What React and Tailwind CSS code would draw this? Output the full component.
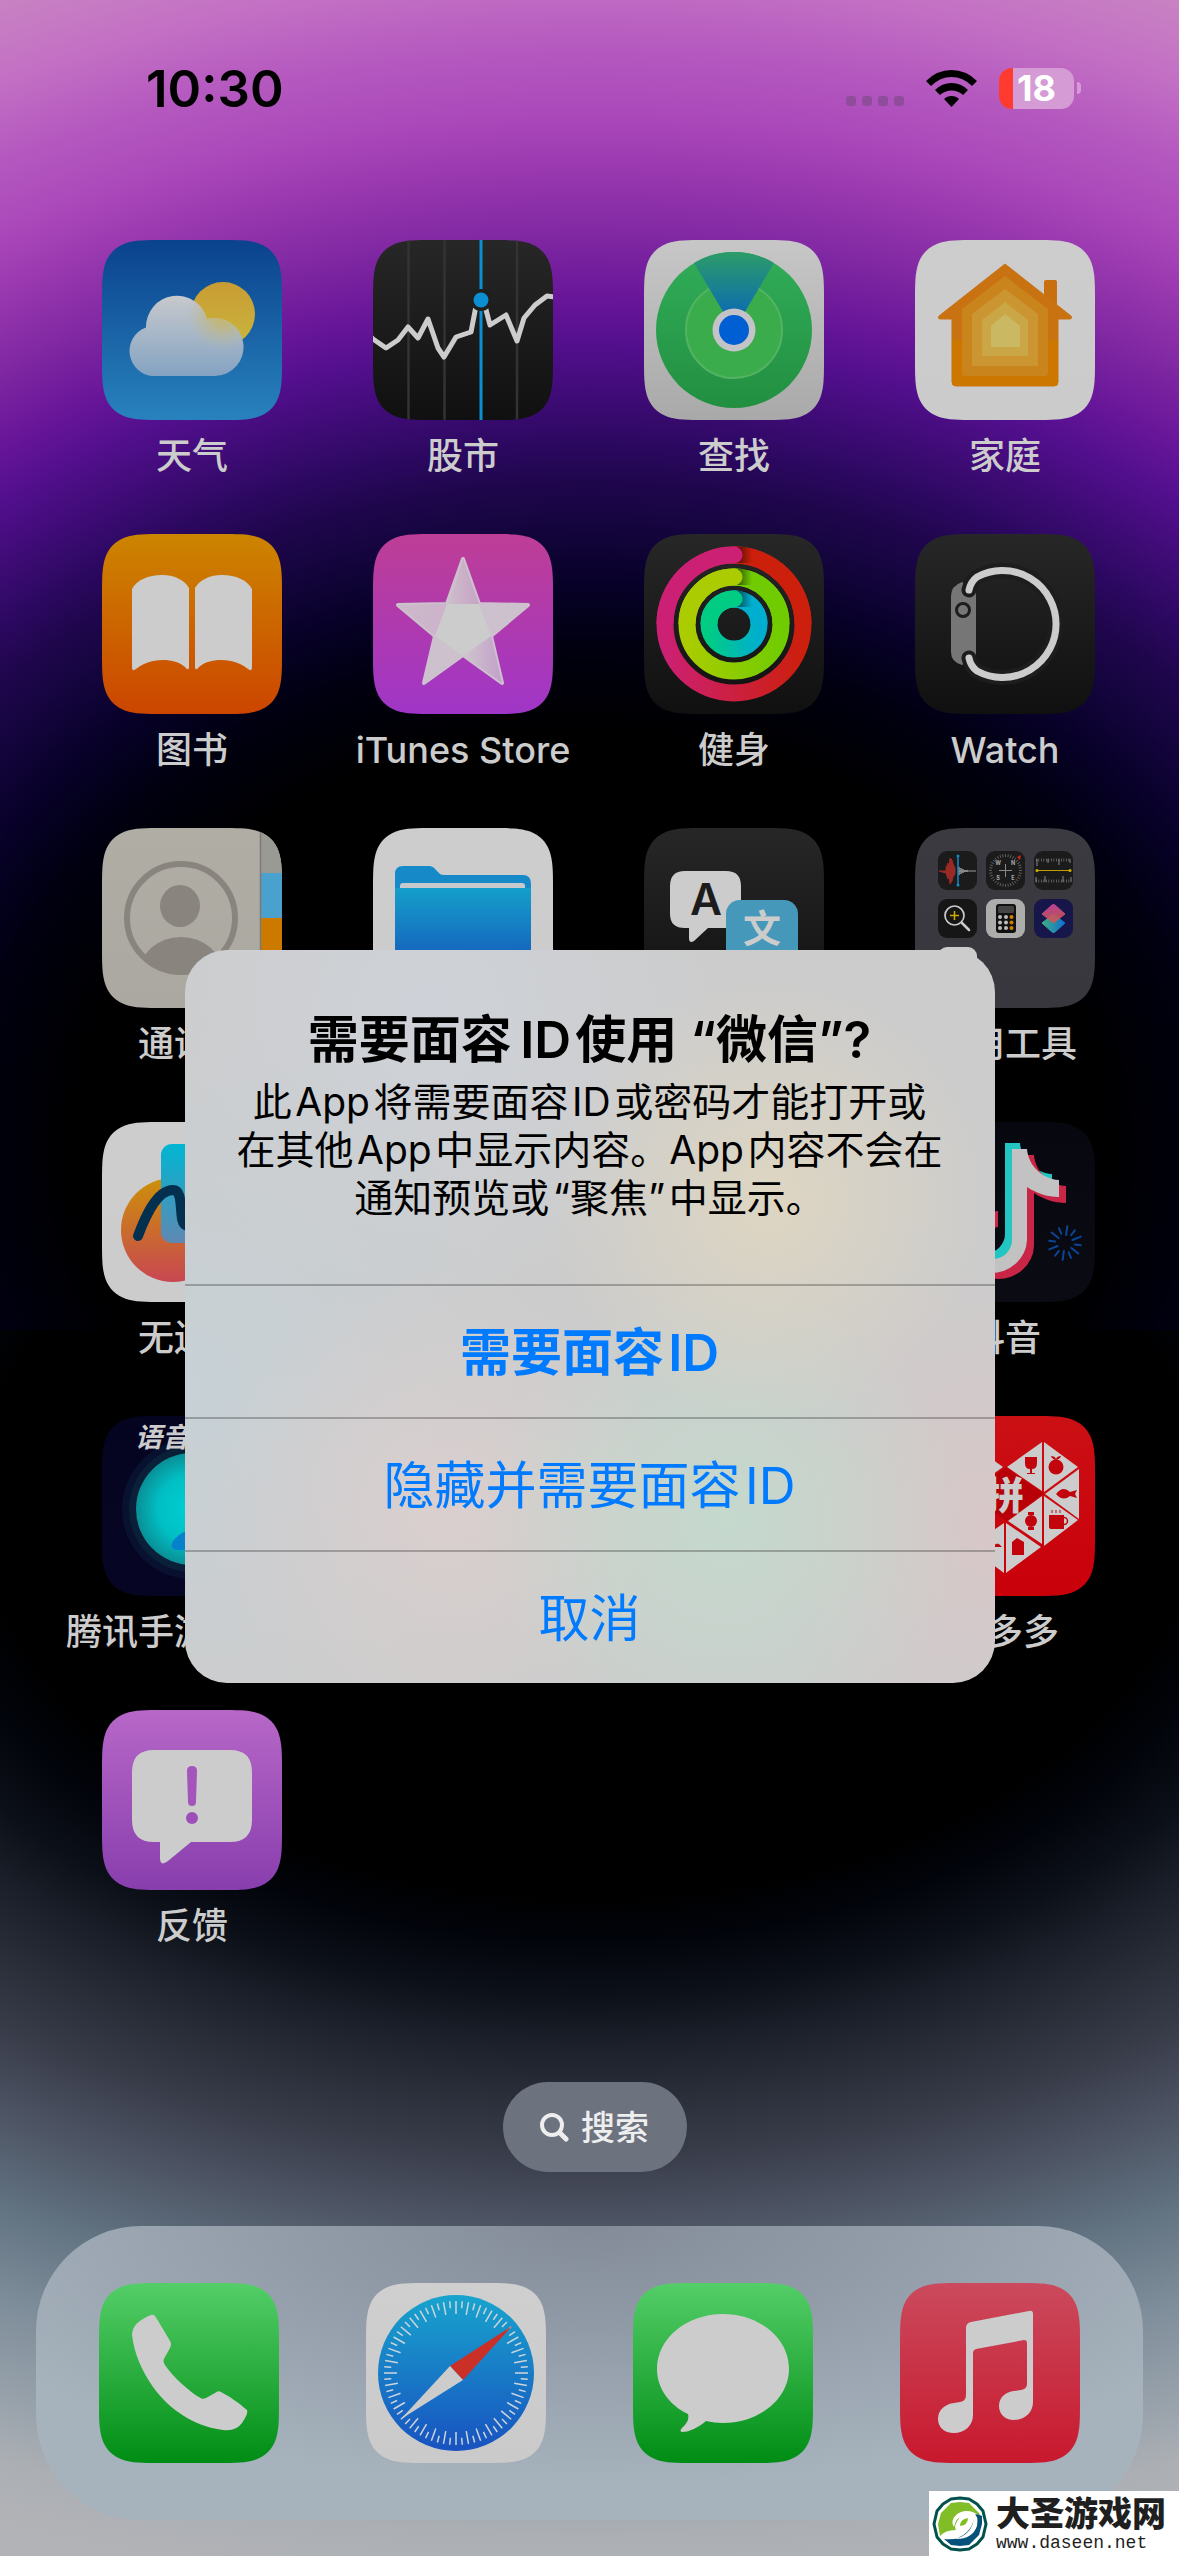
import React from "react";

const SQUIRCLE =
  "M62 0H118C137 0 147 0 157 3.5C166.500 7 173 13.500 176.500 23C180 33 180 43 180 62V118C180 137 180 147 176.500 157C173 166.500 166.500 173 157 176.500C147 180 137 180 118 180H62C43 180 33 180 23 176.500C13.500 173 7 166.500 3.500 157C0 147 0 137 0 118V62C0 43 0 33 3.500 23C7 13.500 13.500 7 23 3.500C33 0 43 0 62 0Z";

const DARK = ["#272727", "#101010"];

function Tile({ id, colors, children }) {
  return (
    <svg viewBox="0 0 180 180" className="size-[180px] shrink-0" aria-hidden="true">
      <defs>
        <clipPath id={`${id}-clip`}>
          <path d={SQUIRCLE} />
        </clipPath>
        <linearGradient id={`${id}-bg`} x1="0" y1="0" x2="0" y2="1">
          <stop offset="0" stopColor={colors[0]} />
          <stop offset="1" stopColor={colors[1]} />
        </linearGradient>
      </defs>
      <g clipPath={`url(#${id}-clip)`}>
        <rect width="180" height="180" fill={`url(#${id}-bg)`} />
        {children}
      </g>
    </svg>
  );
}

function Grad({ id, from, to, horizontal }) {
  return (
    <linearGradient id={id} x1="0" y1="0" x2={horizontal ? "1" : "0"} y2={horizontal ? "0" : "1"}>
      <stop offset="0" stopColor={from} />
      <stop offset="1" stopColor={to} />
    </linearGradient>
  );
}

function Weather() {
  return (
    <Tile id="weather" colors={["#0a428d", "#2882bd"]}>
      <defs>
        <Grad id="sun" from="#c99c33" to="#c9b63e" />
        <linearGradient id="cloud" gradientUnits="userSpaceOnUse" x1="0" y1="57" x2="0" y2="136">
          <stop offset="0" stopColor="#c6c8cc" />
          <stop offset="1" stopColor="#84a3c2" />
        </linearGradient>
        <clipPath id="cloud-shape">
          <path d="M52 136A25 25 0 0 1 44 87.500A31 31 0 0 1 105 79A29 29 0 1 1 113 136Z" />
        </clipPath>
        <radialGradient id="sun-glow">
          <stop offset="0.300" stopColor="#c6b565" stopOpacity="0.750" />
          <stop offset="1" stopColor="#bdb99a" stopOpacity="0" />
        </radialGradient>
      </defs>
      <circle cx="121" cy="74" r="32" fill="url(#sun)" />
      <g clipPath="url(#cloud-shape)">
        <rect x="20" y="50" width="130" height="90" fill="url(#cloud)" />
        <circle cx="121" cy="74" r="36" fill="url(#sun-glow)" />
      </g>
    </Tile>
  );
}

function Stocks() {
  return (
    <Tile id="stocks" colors={DARK}>
      <path d="M35.500 0V180M71.500 0V180M144 0V180" stroke="#333" strokeWidth="2.500" />
      <path d="M108 0V180" stroke="#0b8fd2" strokeWidth="3" />
      <path
        d="M-2 97L0 99L13 108L25 100L35 87L45 98L55 79L65 108L71 117L83 97L98 92L103 66L108 58L112 66L117 85L133 75L144 101L151 78L162 65L174 56L182 57"
        fill="none"
        stroke="#ccc"
        strokeWidth="5"
        strokeLinejoin="round"
      />
      <circle cx="108" cy="60" r="11" fill="#1f1f1f" />
      <circle cx="108" cy="60" r="7.500" fill="#0b8fd2" />
    </Tile>
  );
}

function FindMy() {
  return (
    <Tile id="find" colors={["#c7c7c7", "#a9a9a9"]}>
      <defs>
        <Grad id="radar" from="#31ad59" to="#228f40" />
        <Grad id="beam" from="#2c9c68" to="#0560c2" />
      </defs>
      <circle cx="90" cy="90" r="78" fill="url(#radar)" />
      <circle cx="90" cy="90" r="48" fill="#3bac4b" stroke="#52b362" strokeWidth="2" />
      <path d="M90 90L50 23A78 78 0 0 1 130 23Z" fill="url(#beam)" />
      <circle cx="90" cy="90" r="21.500" fill="#c3c3c8" />
      <circle cx="90" cy="90" r="15" fill="#0060d3" />
    </Tile>
  );
}

function Home() {
  return (
    <Tile id="home" colors={["#cdcdcd", "#cbcbcb"]}>
      <path d="M129 60V42Q129 40 131 40H140Q142 40 142 42V75Z" fill="#c87010" />
      <path
        d="M90 24L24 76Q22 79 26 79H37V142Q37 146 41 146H139Q143 146 143 142V79H154Q158 79 156 76Z"
        fill="#c97212"
        stroke="#c97212"
        strokeLinejoin="round"
      />
      <path d="M37 100V142Q37 146 41 146H139Q143 146 143 142V100Z" fill="#cc7700" />
      <path d="M90 36L133 69V133Q133 136 130 136H50Q47 136 47 133V69Z" fill="#ca841c" />
      <path d="M90 49L123 74V126H57V74Z" fill="#cb9531" />
      <path d="M90 62L113 80V116H67V80Z" fill="#cba647" />
      <path d="M90 74L105 86V107H76V86Z" fill="#cbb862" />
    </Tile>
  );
}

function Books() {
  const page =
    "M30 55C35 46 46 41 60 41C74 41 83 47 87 54V134Q86 137 83 133C77 128 70 126 61 126C49 126 40 130 34 135Q30 138 30 133Z";
  return (
    <Tile id="books" colors={["#cc8500", "#cc4500"]}>
      <path d={page} fill="#ccc" />
      <path d={page} fill="#ccc" transform="translate(180 0) scale(-1 1)" />
    </Tile>
  );
}

function ITunes() {
  return (
    <Tile id="itunes" colors={["#be3e96", "#a036c8"]}>
      <defs>
        <Grad id="arm-top" from="#cdbccb" to="#c7a3c5" horizontal />
        <Grad id="arm-left" from="#cbbac9" to="#cdb2cb" horizontal />
        <Grad id="arm-foot" from="#cdc6cd" to="#c3a0ca" horizontal />
      </defs>
      <path
        d="M90 25L106 70L155 71L118 102L129 149L90 121L51 149L62 102L25 71L74 70Z"
        fill="#ccc1cc"
        stroke="#ccc1cc"
        strokeWidth="4"
        strokeLinejoin="round"
      />
      <path d="M90 25L106 70H76Z" fill="url(#arm-top)" />
      <path d="M25 71L74 70L62 102Z" fill="url(#arm-left)" />
      <path d="M118 102L129 149L90 121Z" fill="url(#arm-foot)" />
      <path d="M74 70H106L118 102L90 122L62 102Z" fill="#cdcccd" />
    </Tile>
  );
}

function Fitness() {
  const rings = [
    { r: 69, from: "#cc2074", to: "#cc1f0c", key: "move" },
    { r: 47, from: "#aacc00", to: "#70cc00", key: "exercise" },
    { r: 25, from: "#00cc84", to: "#00aecf", key: "stand" },
  ];
  return (
    <Tile id="fitness" colors={DARK}>
      <defs>
        <Grad id="cap-shadow" from="#000000b0" to="#00000000" horizontal />
        {rings.map((ring) => (
          <Grad key={ring.key} id={ring.key} from={ring.from} to={ring.to} horizontal />
        ))}
      </defs>
      {rings.map(({ r, from, to, key }) => (
        <g key={key} fill="none" strokeWidth="17">
          <circle cx="90" cy="90" r={r} stroke={`url(#${key})`} />
          <path d={`M90 ${90 - r}A${r} ${r} 0 0 1 ${90 + r} 90`} stroke={to} />
          <rect x="90" y={90 - r - 8} width="18" height="16" fill="url(#cap-shadow)" strokeWidth="0" />
          <path d={`M${90 - r} 90A${r} ${r} 0 0 1 90 ${90 - r}`} stroke={from} />
          <circle cx="90" cy={90 - r} r="8.500" fill={from} strokeWidth="0" />
        </g>
      ))}
    </Tile>
  );
}

function Watch() {
  const band = "M54 56C55 51 58 46 62 43A53.500 53.500 0 1 1 62 137C58 134 55 129 54 124";
  return (
    <Tile id="watch" colors={DARK}>
      <path d="M47 48Q36 52 36 62V118Q36 128 47 131L61 122V57Z" fill="#767676" />
      <path d={band} fill="none" stroke="#1d1d1d" strokeWidth="15" strokeLinecap="round" />
      <path d={band} fill="none" stroke="#ccc" strokeWidth="7" strokeLinecap="round" />
      <circle cx="48" cy="76" r="6.500" fill="#767676" stroke="#1d1d1d" strokeWidth="3" />
    </Tile>
  );
}

function Contacts() {
  return (
    <Tile id="contacts" colors={["#b0ada5", "#aba8a1"]}>
      <defs>
        <clipPath id="portrait">
          <circle cx="79" cy="90" r="52" />
        </clipPath>
      </defs>
      <rect x="158" y="0" width="22" height="45" fill="#9a9a94" />
      <rect x="158" y="45" width="22" height="45" fill="#4aa1cd" />
      <rect x="158" y="90" width="22" height="90" fill="#cc7900" />
      <path d="M158.500 0V180" stroke="#7c7a75" strokeWidth="1.500" />
      <circle cx="79" cy="90" r="54" fill="none" stroke="#89857e" strokeWidth="6" />
      <ellipse cx="78" cy="78" rx="20" ry="21" fill="#89857e" />
      <ellipse cx="79" cy="146" rx="42" ry="37" fill="#89857e" clipPath="url(#portrait)" />
    </Tile>
  );
}

function Files() {
  return (
    <Tile id="files" colors={["#cdcdcd", "#cccccc"]}>
      <defs>
        <Grad id="folder" from="#149fca" to="#1558bc" />
      </defs>
      <path d="M22 60V46Q22 38 30 38H56Q60 38 63 42L67 46Q68 47 72 47H150Q158 47 158 56V100H22Z" fill="#168ac8" />
      <path d="M27 62V58Q27 55 30 55H149Q152 55 152 58V62Z" fill="#c6cacd" />
      <path d="M22 60H158V130Q158 142 148 142H32Q22 142 22 130Z" fill="url(#folder)" />
    </Tile>
  );
}

function Translate() {
  return (
    <Tile id="translate" colors={DARK}>
      <path
        d="M41 43H82Q97 43 97 58V100H64L50 113Q45 116 45 110V100H41Q26 100 26 86V58Q26 43 41 43Z"
        fill="#ccc"
      />
      <text x="62" y="87" textAnchor="middle" fontFamily="Inter" fontWeight="600" fontSize="44" fill="#1c1c1c">A</text>
      <rect x="82" y="72" width="72" height="66" rx="14" fill="#4598b9" />
      <text x="118" y="114" textAnchor="middle" fontFamily="Noto Sans CJK SC" fontWeight="700" fontSize="38" fill="#ccc">文</text>
    </Tile>
  );
}

function Mini({ x, y, fill, children }) {
  return (
    <g transform={`translate(${x} ${y})`}>
      <rect width="39" height="39" rx="9" fill={fill} />
      {children}
    </g>
  );
}

function Utilities() {
  const ticks = Array.from({ length: 36 }, (_, i) => i * 10);
  return (
    <Tile id="utilities" colors={["#3b3a41", "#38373d"]}>
      <Mini x={23} y={23} fill="#1b1b1b">
        <path d="M1 20H8V17L10 12L11 16L12 7L14 9L15 13L17 17V23L15 26L14 30L12 33L11 25L10 28L8 22Z" fill="#9a2a25" stroke="#9a2a25" />
        <path d="M21 16V24M23 17V23M25 18V22M27 19V21M29 19V21" stroke="#999" strokeWidth="1.500" />
        <path d="M21 20H38" stroke="#999" />
        <path d="M20 5V34" stroke="#168ac8" strokeWidth="1.500" />
        <circle cx="20" cy="5" r="1.500" fill="#168ac8" />
        <circle cx="20" cy="34" r="1.500" fill="#168ac8" />
      </Mini>
      <Mini x={71} y={23} fill="#1b1b1b">
        {ticks.map((a) => (
          <path key={a} d="M19.500 3V6" stroke="#777" strokeWidth="0.700" transform={`rotate(${a} 19.500 19.500)`} />
        ))}
        <path d="M19.500 13V26M13 19.500H26" stroke="#888" />
        <path d="M31 6L35 4L34 9Z" fill="#c42a22" />
        <g fontFamily="Inter" fontWeight="700" fontSize="5.500" fill="#aaa" textAnchor="middle">
          <text x="12" y="14">W</text>
          <text x="27" y="14">N</text>
          <text x="12" y="29">S</text>
          <text x="27" y="29">E</text>
        </g>
      </Mini>
      <Mini x={119} y={23} fill="#1b1b1b">
        <path d="M2 9H37" stroke="#777" strokeWidth="3" strokeDasharray="0.700 1.800" />
        <path d="M3 8V15M14 8V12M25 8V14M36 8V12" stroke="#888" />
        <path d="M2 30H37" stroke="#777" strokeWidth="3" strokeDasharray="0.700 1.800" />
        <path d="M2 26V31M11 25V31M29 25V31M37 26V31" stroke="#888" />
        <path d="M3 19.500H36" stroke="#bfa000" />
        <circle cx="3" cy="19.500" r="1.500" fill="#ccb000" />
        <circle cx="36" cy="19.500" r="1.500" fill="#ccb000" />
      </Mini>
      <Mini x={23} y={71} fill="#161616">
        <circle cx="16.500" cy="16.500" r="9.500" fill="none" stroke="#ccc" strokeWidth="1.700" />
        <path d="M24 24L31 31" stroke="#ccc" strokeWidth="2.500" strokeLinecap="round" />
        <path d="M16.500 12V21M12 16.500H21" stroke="#ccaa00" strokeWidth="1.500" />
      </Mini>
      <Mini x={71} y={71} fill="#adadab">
        <rect x="10" y="5" width="20" height="29" rx="3" fill="#111" />
        <rect x="12" y="7" width="16" height="7" rx="1.500" fill="#444" />
        {[18, 23.5, 29].map((cy) => (
          <g key={cy}>
            <circle cx="14" cy={cy} r="2" fill="#bbb" />
            <circle cx="20" cy={cy} r="2" fill="#bbb" />
            <circle cx="25.500" cy={cy} r="2" fill="#d07d00" />
          </g>
        ))}
      </Mini>
      <Mini x={119} y={71} fill="#17164a">
        <defs>
          <Grad id="shortcut-a" from="#3fae80" to="#0f6fd6" horizontal />
          <linearGradient id="shortcut-b" x1="0.300" y1="0" x2="0.500" y2="1">
            <stop offset="0" stopColor="#c748a0" />
            <stop offset="1" stopColor="#cf5a48" />
          </linearGradient>
        </defs>
        <path d="M19.500 15L31 24L21 33Q19.500 34 18 33L8 24Z" fill="url(#shortcut-a)" stroke="url(#shortcut-a)" strokeLinejoin="round" />
        <path d="M18 6Q19.500 5 21 6L31 15L19.500 24L8 15Z" fill="url(#shortcut-b)" stroke="url(#shortcut-b)" strokeLinejoin="round" opacity="0.900" />
      </Mini>
      <Mini x={23} y={119} fill="#ccc" />
    </Tile>
  );
}

function Freeform() {
  return (
    <Tile id="freeform" colors={["#cdcdcd", "#cccccc"]}>
      <defs>
        <Grad id="ball" from="#cc9008" to="#c84752" />
        <Grad id="note" from="#00b6d2" to="#5f88b2" />
      </defs>
      <circle cx="71" cy="108" r="52" fill="url(#ball)" />
      <rect x="59" y="22" width="90" height="99" rx="11" fill="url(#note)" />
      <path
        d="M36 114C42 98 54 68 71 68C80 68 78 84 80 97C82 107 90 106 98 96"
        fill="none"
        stroke="#02304e"
        strokeWidth="10"
        strokeLinecap="round"
      />
    </Tile>
  );
}

function Douyin() {
  const note =
    "M97 27H112C113 42 126 57 144 58V75C132 75 121 71 112 65V118A36 34 0 1 1 76 83V99A19 19 0 1 0 97 118Z";
  const sparks = Array.from({ length: 12 }, (_, i) => i * 30 + 8);
  return (
    <Tile id="douyin" colors={["#07080f", "#0a0b13"]}>
      <path d={note} fill="#22c5c2" transform="translate(-7 -6)" />
      <path d={note} fill="#c92546" transform="translate(7 6)" />
      <path d={note} fill="#c2c2c2" />
      {sparks.map((a) => (
        <path
          key={a}
          d={a % 60 === 8 ? "M150 113V104" : "M150 111V105"}
          stroke="#0a4596"
          strokeWidth="2"
          strokeLinecap="round"
          transform={`rotate(${a} 150 121)`}
        />
      ))}
    </Tile>
  );
}

function Booster() {
  return (
    <Tile id="booster" colors={["#050420", "#060524"]}>
      <defs>
        <radialGradient id="orb">
          <stop offset="0" stopColor="#00d0d4" />
          <stop offset="0.600" stopColor="#00bfc4" />
          <stop offset="1" stopColor="#0a8f96" />
        </radialGradient>
      </defs>
      <circle cx="90" cy="93" r="70" fill="#081230" />
      <circle cx="90" cy="93" r="63" fill="#0a2038" />
      <circle cx="90" cy="93" r="56" fill="url(#orb)" />
      <ellipse cx="90" cy="122" rx="22" ry="9" fill="#0682cc" transform="rotate(-24 90 122)" />
      <text x="33" y="31" fontFamily="Noto Sans CJK SC" fontWeight="700" fontStyle="italic" fontSize="27" fill="#ccc">语音</text>
    </Tile>
  );
}

function Pinduoduo() {
  return (
    <Tile id="pdd" colors={["#cb1014", "#c9000a"]}>
      <path d="M91 51L129 78L91 105L53 78Z" fill="#b80008" />
      <g fill="#ccc">
        <path d="M127 26V75L92 51Z" />
        <path d="M129 26V76L163 51Z" />
        <path d="M164 53V103L130 78Z" />
        <path d="M129 80V130L163 104Z" />
        <path d="M127 80V128L93 105Z" />
        <path d="M91 107V157L126 131Z" />
        <path d="M89 107V157L54 131Z" />
        <path d="M53 26V76L88 51Z" />
      </g>
      <text x="90" y="93" textAnchor="middle" fontFamily="Noto Sans CJK SC" fontWeight="900" fontSize="38" fill="#ccc">拼</text>
      <g fill="#c2040c">
        <path d="M110 41H122V47Q122 53 117 53V57H120V58H112V57H115V53Q110 53 110 47Z" />
        <circle cx="141" cy="51" r="7.500" />
        <path d="M136 40Q140 40 141 43Q142 40 146 40Q145 43 141 44Q137 43 136 40Z" />
        <path d="M141 78Q148 69 155 76L162 74L160 78L162 82L155 80Q148 86 141 78Z" />
        <path d="M134 99H149V113H136Q134 113 134 111Z" />
        <circle cx="149" cy="105" r="3.500" fill="none" stroke="#c2040c" strokeWidth="1.500" />
        <path d="M137 94V97M141 94V97M145 94V97" stroke="#c2040c" />
        <circle cx="116" cy="105" r="6" />
        <path d="M113 96H119V99H113ZM113 111H119V114H113Z" />
        <path d="M97 126L102 122L109 126V139H97Z" />
        <path d="M78 131Q82 124 87 131Z" />
      </g>
    </Tile>
  );
}

function Feedback() {
  return (
    <Tile id="feedback" colors={["#b767c7", "#883eae"]}>
      <path
        d="M52 40H128Q150 40 150 62V110Q150 132 128 132H89L66 151Q58 157 58 148V132H52Q30 132 30 110V62Q30 40 52 40Z"
        fill="#ccc"
      />
      <path d="M85 61Q85 56 90 56Q95 56 95 61L94 92Q94 96 90 96Q86 96 86 92Z" fill="#a554bc" />
      <circle cx="90" cy="108" r="6" fill="#9c4fb9" />
    </Tile>
  );
}

function Phone() {
  return (
    <Tile id="phone" colors={["#54ce68", "#008d14"]}>
      <path
        d="M52 32C42 36 33 42 33 52C35 69 42 87 54 104C70 126 94 143 124 147C134 148 139 145 143 140C147 134 149 130 148 127C140 120 130 113 122 109Q119 107 116 110L107 115Q103 117 100 114C91 109 73 93 66 82Q63 78 66 74L71 65Q73 61 71 58C66 49 61 41 56 33Q54 31 52 32Z"
        fill="#ccc"
      />
    </Tile>
  );
}

function Safari() {
  const ticks = Array.from({ length: 72 }, (_, i) => i);
  return (
    <Tile id="safari" colors={["#cfcfcf", "#cacaca"]}>
      <defs>
        <Grad id="dial" from="#18a4cd" to="#1852c0" />
      </defs>
      <circle cx="90" cy="90" r="78" fill="url(#dial)" />
      {ticks.map((i) => (
        <path
          key={i}
          d={i % 2 ? "M90 18V25" : "M90 18V31"}
          stroke="#ccd4dc"
          strokeWidth="1.500"
          transform={`rotate(${i * 5} 90 90)`}
        />
      ))}
      <path d="M146 43L84 83L97 97Z" fill="#cb3028" />
      <path d="M35 136L84 83L97 97Z" fill="#ccc" />
    </Tile>
  );
}

function Messages() {
  return (
    <Tile id="messages" colors={["#54ce68", "#008d14"]}>
      <path
        d="M90 31C126 31 156 55 156 86C156 116 126 140 90 140Q81 140 73 138C66 144 57 149 49 149Q46 148 49 145Q57 138 55 131C36 122 24 105 24 86C24 55 54 31 90 31Z"
        fill="#ccc"
      />
    </Tile>
  );
}

function Music() {
  return (
    <Tile id="music" colors={["#cb4a5d", "#c8182d"]}>
      <path
        d="M71 39L129 28Q133 27 133 31V119C133 130 124 137 114 137C105 137 99 131 99 123C99 114 106 109 114 108L121 107Q127 106 127 101V60Q127 57 124 57L76 66Q73 67 73 70V132C73 143 64 150 54 150C44 150 38 144 38 136C38 127 45 121 54 120L60 119Q66 118 66 112V45Q66 40 71 39Z"
        fill="#ccc"
      />
    </Tile>
  );
}

const apps = [
  { name: "天气", Icon: Weather },
  { name: "股市", Icon: Stocks },
  { name: "查找", Icon: FindMy },
  { name: "家庭", Icon: Home },
  { name: "图书", Icon: Books },
  { name: "iTunes Store", Icon: ITunes },
  { name: "健身", Icon: Fitness },
  { name: "Watch", Icon: Watch },
  { name: "通讯录", Icon: Contacts },
  { name: "文件", Icon: Files, covered: true },
  { name: "翻译", Icon: Translate, covered: true },
  { name: "实用工具", Icon: Utilities },
  { name: "无边记", Icon: Freeform },
  { name: "抖音", Icon: Douyin, column: "col-start-4" },
  { name: "腾讯手游加速器", Icon: Booster },
  { name: "拼多多", Icon: Pinduoduo, column: "col-start-4" },
  { name: "反馈", Icon: Feedback },
];

const dock = [
  { name: "电话", Icon: Phone },
  { name: "Safari", Icon: Safari },
  { name: "信息", Icon: Messages },
  { name: "音乐", Icon: Music },
];

function StatusBar() {
  return (
    <header className="flex h-16 items-center justify-between pr-[98px] pl-[146px]">
      <time className="text-[51px] leading-none font-semibold text-black">10:30</time>
      <div className="flex items-center">
        <div className="mr-[22px] flex gap-1.5 pt-[26px]">
          <span className="size-2.5 rounded-[3px] bg-[#8f4d9c]" />
          <span className="size-2.5 rounded-[3px] bg-[#8f4d9c]" />
          <span className="size-2.5 rounded-[3px] bg-[#8f4d9c]" />
          <span className="size-2.5 rounded-[3px] bg-[#8f4d9c]" />
        </div>
        <svg viewBox="0 0 51 37" className="mr-[22px] h-[37px] w-[51px]" aria-hidden="true">
          <path d="M0 11Q11 0 25.500 0T51 11L46 16Q37 7 25.500 7T5 16Z" />
          <path d="M9 20Q16 13 25.500 13T42 20L37 25Q32 20.500 25.500 20.500T14 25Z" />
          <path d="M18 29Q21 26 25.500 26T33 29L25.500 37Z" />
        </svg>
        <div className="flex h-[41px] w-[75px] items-center justify-center overflow-hidden rounded-[13px] bg-[linear-gradient(90deg,#ff3b30_14px,#d49bd5_14px)] text-4xl leading-none font-bold text-white">
          18
        </div>
        <span className="ml-[3px] h-3 w-1 rounded-r-full bg-[#d49bd5]" />
      </div>
    </header>
  );
}

function Alert() {
  return (
    <div className="absolute inset-0 flex items-center justify-center pt-[76px]">
      <section
        role="alertdialog"
        aria-labelledby="alert-title"
        aria-describedby="alert-body"
        className="w-[810px] max-w-[90%] overflow-hidden rounded-[42px] bg-[#cccccc] bg-[radial-gradient(circle_at_72%_34%,#ded6c2_0,#ded6c200_220px),radial-gradient(circle_at_67%_78%,#c5d9cd_0,#c5d9cd00_240px),radial-gradient(circle_at_32%_76%,#dacfce_0,#dacfce00_240px),radial-gradient(circle_at_100%_78%,#d8c7c8_0,#d8c7c800_260px),radial-gradient(circle_at_0%_60%,#c7d1d6_0,#c7d1d600_360px),radial-gradient(circle_at_30%_8%,#ced2d8_0,#ced2d800_300px)] text-center"
      >
        <div className="px-8 pt-14 pb-[62px] text-black">
          <h1 id="alert-title" className="text-[51px] leading-[68px] font-semibold">
            需要面容{"\u2009"}ID{"\u200A"}使用 “微信”?
          </h1>
          <p id="alert-body" className="mt-1 text-[39px] leading-[48px]">
            此{"\u200A"}App{"\u200A"}将需要面容{"\u200A"}ID{"\u200A"}或密码才能打开或
            <br />
            在其他{"\u200A"}App{"\u200A"}中显示内容。App{"\u200A"}内容不会在
            <br />
            通知预览或{"\u200A"}“聚焦”{"\u200A"}中显示。
          </p>
        </div>
        <div className="flex flex-col text-[51px] text-[#007aff]">
          <button type="button" className="h-[133px] border-t-2 border-black/25 pt-1 font-semibold">
            需要面容{"\u200A"}ID
          </button>
          <button type="button" className="h-[133px] border-t-2 border-black/25 pt-1">
            隐藏并需要面容{"\u200A"}ID
          </button>
          <button type="button" className="h-[133px] border-t-2 border-black/25 pt-1">
            取消
          </button>
        </div>
      </section>
    </div>
  );
}

function SiteBadge() {
  return (
    <div className="absolute right-0 bottom-0 flex h-[65px] w-[250px] items-center gap-2 bg-white pl-[3px]">
      <svg viewBox="0 0 56 56" className="size-14 shrink-0" aria-hidden="true">
        <path
          d="M28 2L37 3L45 8L51 15L54 28L51 41L45 48L37 53L28 54L19 53L11 48L5 41L2 28L5 15L11 8L19 3Z"
          fill="#fff"
          stroke="#00524a"
          strokeWidth="3"
          strokeLinejoin="round"
        />
        <path d="M8 40L6 28L9 17L19 7L28 6L37 7L47 17L49 22Q38 10 28 21Q21 30 24 34Q13 34 8 40Z" fill="#80bd26" />
        <path d="M50 20L50 28L47 39L37 49L28 50L19 49L12 43Q26 45 35 36Q44 27 40 18Q47 18 50 20Z" fill="#06527a" />
        <path d="M22 31Q24 19 35 20Q42 17 41 27Q37 40 22 43Q40 44 45 30Q47 20 41 16Q31 13 24 19Q18 25 22 31Z" fill="#fff" />
        <path d="M28 30Q28 23 36 22Q36 29 28 30Z" fill="#80bd26" />
      </svg>
      <div className="flex flex-col text-[#1f1f1f]">
        <span className="text-[34px] leading-[38px] font-black">大圣游戏网</span>
        <a href="#daseen" className="font-['Liberation_Mono'] text-lg leading-5">
          www.daseen.net
        </a>
      </div>
    </div>
  );
}

export default function App() {
  return (
    <div className="relative flex min-h-screen flex-col overflow-hidden bg-black bg-[radial-gradient(1555px_1260px_at_50%_1150px,#000_33%,#000010_40%,#070128_45%,#160540_50%,#1f064c_53%,#2b0860_56%,#3d0b74_59.500%,#530f8e_64%,#6a179a_68%,#8229a3_73%,#9a39b0_78%,#aa48ba_82%,#b65bc0_88%,#c370c4_93%,#c986c2_100%),radial-gradient(1677px_1100px_at_50%_1500px,#000_36%,#02040b_40%,#0c1018_45%,#1a1e28_49%,#292d38_54%,#373b48_59%,#484d5d_64%,#617280_73%,#7f8e9b_81%,#98a2ab_89%,#abafb4_94%,#b2b3b7_100%)] bg-[length:100%_1330px,100%_100%] bg-no-repeat font-[Inter,'Noto_Sans_CJK_SC',sans-serif]">
      <div className="flex flex-1 flex-col pt-14">
        <StatusBar />
        <main className="mt-[120px] flex flex-col">
          <ul className="grid grid-cols-[repeat(4,180px)] justify-between gap-y-14 pr-[84px] pl-[102px]">
            {apps.map(({ name, Icon, column, covered }) => (
              <li key={name} className={column}>
                <button type="button" aria-label={name} className="flex w-[180px] flex-col items-center gap-3.5">
                  <Icon />
                  {covered ? null : (
                    <span className="text-4xl leading-[44px] font-medium whitespace-nowrap text-[#cccccc]">{name}</span>
                  )}
                </button>
              </li>
            ))}
          </ul>
          <button
            type="button"
            className="mt-[134px] ml-2.5 flex h-[90px] w-[184px] items-center justify-center gap-3 self-center rounded-full bg-[#6c727e] text-[34px] font-medium text-[#eeeeee]"
          >
            <svg viewBox="0 0 29 29" className="size-[29px]" fill="none" stroke="currentColor" aria-hidden="true">
              <circle cx="12" cy="12" r="10" strokeWidth="4" />
              <path d="M20 20L26 26" strokeWidth="5" strokeLinecap="round" />
            </svg>
            搜索
          </button>
        </main>
        <nav className="mx-9 mt-[54px] mb-9 flex justify-between rounded-[105px] bg-[radial-gradient(700px_260px_at_50%_0,#838b98_0,#98a3af_60%,#a6b2bc_100%)] px-[63px] py-[57px]">
          {dock.map(({ name, Icon }) => (
            <button key={name} type="button" aria-label={name}>
              <Icon />
            </button>
          ))}
        </nav>
      </div>
      <Alert />
      <SiteBadge />
    </div>
  );
}
